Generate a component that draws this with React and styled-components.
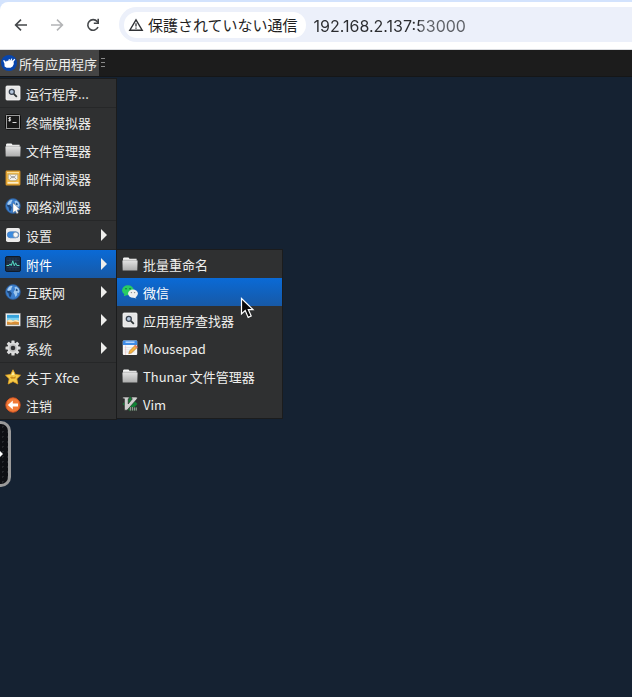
import React from 'react'
import styled, { createGlobalStyle } from 'styled-components'

const GlobalStyle = createGlobalStyle`
  * {
    box-sizing: border-box;
  }

  body {
    margin: 0;
    background: #152232;
  }

  button, input {
    margin: 0;
    padding: 0;
    border: 0;
    background: none;
    color: inherit;
    font: inherit;
    text-align: left;
  }
`

/* ---------- icons ---------- */

const Svg = ({ children, size = 16, box = '0 0 16 16' }) => (
  <svg width={size} height={size} viewBox={box} aria-hidden="true">
    {children}
  </svg>
)

const BackIcon = () => (
  <Svg>
    <path d="M14 8H3M8 2.6L2.6 8L8 13.4" fill="none" stroke="currentColor" strokeWidth="1.6" />
  </Svg>
)

const ForwardIcon = () => (
  <Svg>
    <path d="M2 8H13M8 2.6L13.4 8L8 13.4" fill="none" stroke="currentColor" strokeWidth="1.6" />
  </Svg>
)

const ReloadIcon = () => (
  <Svg>
    <path d="M13 10A5.3 5.3 0 1 1 12.2 4.6L13 5.5" fill="none" stroke="currentColor" strokeWidth="1.6" />
    <path d="M13.2 1.8V6.3H8.8" fill="none" stroke="currentColor" strokeWidth="1.6" />
  </Svg>
)

const WarningIcon = () => (
  <Svg>
    <path d="M8 2.8L14.2 13.2H1.8Z" fill="none" stroke="#303236" strokeWidth="1.4" />
    <path d="M8 6.2V9.6M8 10.4V11.8" stroke="#303236" strokeWidth="1.3" />
  </Svg>
)

const XfceIcon = () => (
  <Svg>
    <circle cx="8" cy="8" r="8" fill="#0745ad" />
    <path
      d="M2 5.2L4 5.4L4.8 7L6 5.4L7 6.2L7.8 4.2L8.8 4L8.8 6L10.4 3.4L11.2 3.6L10.8 6L13.6 3.8L14.2 4.6L12.6 6.8L12.8 9L11.6 11.6L9.6 12.8L5.6 12.8L3.6 11.4L3.4 8.4Z"
      fill="#fff"
    />
  </Svg>
)

const SearchIcon = () => (
  <Svg>
    <rect x="1" y="1" width="14" height="14" rx="1" fill="#e6e6e6" stroke="#fafafa" strokeWidth="0.8" />
    <circle cx="6.8" cy="6.8" r="2.5" fill="#b4c6dc" stroke="#39424f" strokeWidth="1.3" />
    <path d="M8.8 8.8L11.8 11.8" stroke="#2e3436" strokeWidth="1.8" />
  </Svg>
)

const TerminalIcon = () => (
  <Svg>
    <rect x="0.5" y="0.5" width="15" height="15" rx="1" fill="#9a9a9a" stroke="#111" />
    <rect x="2" y="2" width="12" height="12" fill="#181818" />
    <path
      d="M6 3.8H4.2L3.7 4.5L4.2 5.2H5.2L5.7 5.9L5.2 6.7H3.4M4.7 3V7.5M7.5 8.5H11.5"
      fill="none"
      stroke="#f2f2f2"
      strokeWidth="0.9"
    />
  </Svg>
)

const FolderIcon = () => (
  <Svg>
    <defs>
      <linearGradient id="folder" x1="0" y1="0" x2="0" y2="1">
        <stop offset="0" stopColor="#e2e2e2" />
        <stop offset="1" stopColor="#adadad" />
      </linearGradient>
    </defs>
    <path d="M1 13V2.5L1.8 1.6H6.5L7.5 2.8H14.6V12Z" fill="#f5f5f5" />
    <path d="M0.4 4.5H15.6L15.3 14.4H0.7Z" fill="url(#folder)" />
    <path d="M1 4.2H15" stroke="#8f8f8f" strokeWidth="0.6" />
  </Svg>
)

const MailIcon = () => (
  <Svg>
    <rect x="1.2" y="1.2" width="13.6" height="13.6" rx="0.6" fill="#f4bd4c" stroke="#e09c2a" strokeWidth="1.2" />
    <path d="M2 2.4H14" stroke="#fde3a1" />
    <path d="M2.6 12.8H13.4" stroke="#fdf3d8" strokeWidth="1.4" />
    <path d="M3.2 4.2H12.8V8.6L10.8 10.8H5.2L3.2 8.6Z" fill="#f6f4ee" stroke="#a98f56" strokeWidth="0.7" />
    <path d="M5 5.2L6.2 6.6H9.8L11 5.2M5 9L6.2 7.6H9.8L11 9" fill="none" stroke="#8d8d8d" strokeWidth="0.8" />
  </Svg>
)

const Globe = () => (
  <>
    <circle cx="8" cy="8" r="7.4" fill="#3b7fce" stroke="#2d5689" strokeWidth="0.8" />
    <path d="M5.2 7.2L6.8 9.2L6.2 11.4L5.2 13.6L4 12L3.6 9.4L2 8L2.4 6.6Z" fill="#1f4679" />
    <path d="M2.4 5.4L4 3L6.4 1.8L7.6 2.6L6.4 4L6.4 5.4L4.6 6.6L2.8 7Z" fill="#a9cdef" />
    <path d="M9.4 3.6L11.2 2.4L13.6 4.4L14.6 7L13.8 9L12.2 8.4L12.2 11L10.4 13L9.6 10.6L8.4 8.4L9.4 6.4L10.4 5.2Z" fill="#9cc6ec" />
    <path d="M11.2 4.6L13 6L12.2 7.2L10.6 6.8Z" fill="#27538a" />
  </>
)

const GlobeIcon = () => <Svg><Globe /></Svg>

const BrowserIcon = () => (
  <Svg>
    <Globe />
    <path d="M8 5L15 11.5L12 12L13.4 15L11.8 15.7L10.4 12.8L8 14.8Z" fill="#fff" stroke="#666" strokeWidth="0.4" />
  </Svg>
)

const SettingsIcon = () => (
  <Svg>
    <rect x="1" y="1" width="14" height="14" rx="1.8" fill="#ececec" />
    <rect x="2.3" y="4.8" width="11.5" height="6" rx="3" fill="#3c8ce0" stroke="#3c77bd" strokeWidth="0.7" />
    <circle cx="10.7" cy="7.8" r="2.6" fill="#f8f8f8" stroke="#8a96a5" strokeWidth="0.7" />
  </Svg>
)

const MonitorIcon = () => (
  <Svg>
    <rect x="0.5" y="0.5" width="15" height="15" rx="1.6" fill="#1c2c40" stroke="#101a28" />
    <path d="M2 4.5H14M2 8H14M2 11.5H14M5 2V14M8 2V14M11 2V14" stroke="#2b4462" strokeWidth="0.6" />
    <path d="M1.5 9.5H4L5 8L6.2 9.6L7.8 4.8L9.3 9.8L10.6 6.8L11.8 9.5H14.5" fill="none" stroke="#55d8c1" strokeWidth="1" />
  </Svg>
)

const PictureIcon = () => (
  <Svg>
    <rect x="0.8" y="1.4" width="14.4" height="12.6" fill="#f4f4f4" stroke="#aaa" strokeWidth="0.5" />
    <rect x="2" y="2.8" width="12" height="10" fill="#36a3dc" />
    <path d="M2 5.8H14V8H2Z" fill="#7dd2f2" />
    <path d="M2 8.4L5 7.4L8 8.6L11 7.8L14 8.4V11H2Z" fill="#fbe6b2" />
    <path d="M2 9.4L6 10.4L10 9.6L14 10.2V12.8H2Z" fill="#d98d35" />
  </Svg>
)

const GearIcon = () => (
  <Svg>
    <g fill="#dcdcdc">
      {[0, 45, 90, 135].map(turn => (
        <rect key={turn} x="6.4" y="0.5" width="3.2" height="15" rx="0.6" transform={`rotate(${turn} 8 8)`} />
      ))}
      <circle cx="8" cy="8" r="5.6" />
    </g>
    <circle cx="8" cy="8" r="3.8" fill="#bdbdbd" />
    <circle cx="8" cy="8" r="2.3" fill="#303132" />
  </Svg>
)

const StarIcon = () => (
  <Svg>
    <path
      d="M8 0.8L10.3 5.4L15.5 6.2L11.8 9.8L12.8 15L8 12.5L3.2 15L4.2 9.8L0.5 6.2L5.7 5.4Z"
      fill="#f6cb48"
      stroke="#e5a323"
      strokeWidth="0.8"
    />
    <path d="M5 8.3L7 7.4L8.5 8.2L11 7.2L10.3 9.6L6.5 9.8Z" fill="#c98a1c" />
    <path d="M8 2.4L9.5 5.8L6.5 6Z" fill="#fff0a6" />
  </Svg>
)

const LogoutIcon = () => (
  <Svg>
    <circle cx="8" cy="8" r="7.2" fill="#f07a38" stroke="#dd5520" strokeWidth="0.9" />
    <path d="M2.8 8L7.8 3.6V6.6H13V9.4H7.8V12.4Z" fill="#fff" />
  </Svg>
)

const WechatIcon = () => (
  <Svg>
    <path d="M1.8 12.2L2.6 9.5L5.4 11Z" fill="#28cd63" />
    <ellipse cx="5.9" cy="6.2" rx="5.8" ry="5" fill="#28cd63" />
    <circle cx="4" cy="4.8" r="0.8" fill="#14663a" />
    <circle cx="8" cy="4.8" r="0.8" fill="#14663a" />
    <ellipse cx="11" cy="9.6" rx="4.9" ry="4.2" fill="#eee" />
    <path d="M13 12.5L14.4 14.4L11 13.4Z" fill="#eee" />
    <circle cx="9.4" cy="8.6" r="0.7" fill="#888" />
    <circle cx="12.6" cy="8.6" r="0.7" fill="#888" />
  </Svg>
)

const MousepadIcon = () => (
  <Svg>
    <rect x="0.8" y="0.6" width="14.4" height="14.4" rx="1" fill="#f7f7f7" />
    <path d="M0.8 5V1.8Q0.8 0.6 2 0.6H14Q15.2 0.6 15.2 1.8V5Z" fill="#3f8ce6" />
    <path d="M3.5 2.2H12.5" stroke="#c3deff" strokeWidth="1.4" />
    <path d="M2.5 7.6H13M2.5 9.8H13M2.5 12H13" stroke="#d3d8de" strokeWidth="0.6" />
    <path d="M3.6 5.4V15" stroke="#eab6b6" strokeWidth="0.6" />
    <path d="M13.4 5L15.6 7.2L9.5 13L6.7 13.8L7.5 11Z" fill="#f4b23e" stroke="#a7641b" strokeWidth="0.5" />
    <path d="M13.4 5L15.6 7.2L14.4 8.3L12.2 6.1Z" fill="#e27d73" />
  </Svg>
)

const VimIcon = () => (
  <Svg>
    <path d="M8 0.5L15.5 8L8 15.5L0.5 8Z" fill="#118235" />
    <path
      d="M0.8 1H7.2V2.8H6.2V8L10.4 2.8H9.4V1H15.2V2.8L5 14.2H2.4V2.8H0.8Z"
      fill="#cfcfcf"
      stroke="#242424"
      strokeWidth="0.6"
    />
    <path d="M7.4 11H15V15H7.4Z" fill="#26382b" />
    <path d="M8.3 11V14.6M10.3 11V14.6M12.3 11.4V14.6M14.2 11.4V14.6" stroke="#ccc" strokeWidth="0.8" />
  </Svg>
)

const SubmenuArrow = () => (
  <svg width="6" height="12" viewBox="0 0 6 12" aria-hidden="true">
    <path d="M0 0L6 6L0 12Z" fill="#eeeeec" />
  </svg>
)

/* ---------- data ---------- */

const menuGroups = [
  [{ label: '运行程序...', icon: SearchIcon }],
  [
    { label: '终端模拟器', icon: TerminalIcon },
    { label: '文件管理器', icon: FolderIcon },
    { label: '邮件阅读器', icon: MailIcon },
    { label: '网络浏览器', icon: BrowserIcon },
  ],
  [{ label: '设置', icon: SettingsIcon, more: true }],
  [
    { label: '附件', icon: MonitorIcon, more: true, active: true },
    { label: '互联网', icon: GlobeIcon, more: true },
    { label: '图形', icon: PictureIcon, more: true },
    { label: '系统', icon: GearIcon, more: true },
  ],
  [
    { label: '关于 Xfce', icon: StarIcon },
    { label: '注销', icon: LogoutIcon },
  ],
]

const accessories = [
  { label: '批量重命名', icon: FolderIcon },
  { label: '微信', icon: WechatIcon, active: true },
  { label: '应用程序查找器', icon: SearchIcon },
  { label: 'Mousepad', icon: MousepadIcon },
  { label: 'Thunar 文件管理器', icon: FolderIcon },
  { label: 'Vim', icon: VimIcon },
]

const Item = ({ label, icon: Icon, more, active }) => (
  <MenuItem type="button" role="menuitem" $active={active}>
    <Icon />
    <MenuLabel>{label}</MenuLabel>
    {more && <SubmenuArrow />}
  </MenuItem>
)

const App = () => {
  return (
    <Page>
      <GlobalStyle />
      <BrowserChrome>
        <Toolbar>
          <NavButton type="button" aria-label="Back"><BackIcon /></NavButton>
          <NavButton type="button" aria-label="Forward" disabled><ForwardIcon /></NavButton>
          <NavButton type="button" aria-label="Reload"><ReloadIcon /></NavButton>
          <AddressBar>
            <SecurityChip type="button">
              <WarningIcon />
              保護されていない通信
            </SecurityChip>
            <AddressInput type="text" aria-label="URL" defaultValue="192.168.2.137:53000" />
          </AddressBar>
        </Toolbar>
      </BrowserChrome>

      <Panel>
        <AppsButton type="button" aria-expanded="true">
          <XfceIcon />
          所有应用程序
        </AppsButton>
        <Grip aria-hidden="true"><i /><i /><i /></Grip>
      </Panel>

      <Desktop>
        <Menu role="menu">
          {menuGroups.map(group => (
            <MenuGroup key={group[0].label}>
              {group.map(item => (
                <ItemSlot key={item.label}>
                  <Item {...item} />
                  {item.active && (
                    <Submenu role="menu">
                      {accessories.map(entry => <Item key={entry.label} {...entry} />)}
                      <Pointer width="16" height="22" viewBox="0 0 16 22" aria-hidden="true">
                        <path
                          d="M1.5 1.5V17L5.2 13.6L8.2 20.4L11.2 19L8.3 12.6H13Z"
                          fill="#0a0a0a"
                          stroke="#fff"
                          strokeWidth="1.2"
                        />
                      </Pointer>
                    </Submenu>
                  )}
                </ItemSlot>
              ))}
            </MenuGroup>
          ))}
        </Menu>
        <Handle type="button" aria-label="Toggle controls">
          <svg width="3" height="6" viewBox="0 0 3 6" aria-hidden="true">
            <path d="M0 0L3 3L0 6Z" fill="#fff" />
          </svg>
        </Handle>
      </Desktop>
    </Page>
  )
}

const Page = styled.div`
  display: flex;
  flex-direction: column;
  min-height: 100vh;
  font-family: 'Noto Sans CJK SC', 'Noto Sans', sans-serif;
  font-size: 13px;
  color: #eeeeec;
`

const BrowserChrome = styled.header`
  padding-top: 2px;
  background: #d3e3fd;
`

const Toolbar = styled.div`
  display: flex;
  align-items: center;
  gap: 8px;
  height: 48px;
  padding: 0 0 2px 7px;
  background: #fff;
  border-bottom: 1px solid #dadce0;
  border-top-left-radius: 8px;
`

const NavButton = styled.button`
  display: flex;
  align-items: center;
  justify-content: center;
  width: 28px;
  height: 28px;
  color: #44474a;

  &:disabled {
    color: #b3b4b6;
  }
`

const AddressBar = styled.div`
  display: flex;
  flex: 1;
  align-items: center;
  gap: 8px;
  min-width: 0;
  height: 35px;
  margin-left: 4px;
  padding-left: 5px;
  border-radius: 18px 0 0 18px;
  background: #ecf0fa;
`

const SecurityChip = styled.button`
  display: flex;
  flex-shrink: 0;
  align-items: center;
  gap: 4px;
  height: 26px;
  padding: 0 8px 0 4px;
  border-radius: 13px;
  background: #fff;
  color: #1f1f1f;
  font-family: 'Noto Sans CJK JP', sans-serif;
  font-size: 15px;
`

const AddressInput = styled.input`
  flex: 1;
  min-width: 0;
  height: 26px;
  padding-top: 2px;
  outline: none;
  font-family: Inter, sans-serif;
  font-size: 16px;
  color: #1f1f1f;
  /* the port is dimmer than the host */
  background: linear-gradient(90deg, #2b2c2f 106px, #5d6066 106px);
  background-clip: text;
  -webkit-text-fill-color: transparent;
`

const Panel = styled.div`
  display: flex;
  height: 27px;
  background: #1c1c1c;
  border-bottom: 1px solid #151617;
`

const AppsButton = styled.button`
  display: flex;
  align-items: center;
  gap: 2px;
  padding: 0 2px 0 1px;
  background: #444;
`

const Grip = styled.span`
  display: flex;
  flex-direction: column;
  gap: 3px;
  padding: 8px 2px;

  i {
    width: 4px;
    height: 1px;
    background: #8a8a8a;
  }
`

const Desktop = styled.main`
  position: relative;
  flex: 1;
  background: #152232;
`

const Menu = styled.div`
  position: relative;
  z-index: 1;
  width: 117px;
  margin-top: 1px;
  border: solid #1b1c1d;
  border-width: 1px 1px 1px 0;
  background: #2f3031;
`

const MenuGroup = styled.div`
  & + & {
    border-top: 1px solid #262728;
  }
`

const ItemSlot = styled.div`
  position: relative;
`

const MenuItem = styled.button`
  display: flex;
  align-items: center;
  gap: 5px;
  width: 100%;
  height: 28px;
  padding: 0 9px 0 5px;
  white-space: nowrap;
  background: ${props => (props.$active ? 'linear-gradient(#0a6ad6, #1759a6)' : 'none')};
  color: ${props => (props.$active ? '#fff' : '#eeeeec')};

  svg {
    flex-shrink: 0;
  }
`

const MenuLabel = styled.span`
  flex: 1;
`

const Submenu = styled.div`
  position: absolute;
  top: -1px;
  left: 100%;
  width: 167px;
  border: 1px solid #1b1c1d;
  background: #2f3031;
`

const Pointer = styled.svg`
  position: absolute;
  top: 47px;
  left: 123px;
`

const Handle = styled.button`
  position: absolute;
  top: 344px;
  left: 0;
  display: flex;
  align-items: center;
  width: 11px;
  height: 66px;
  border: 3px solid #9a9a9a;
  border-left: 0;
  border-radius: 0 10px 10px 0;
  background: radial-gradient(circle, #25272b 1px, #0e0f13 1px) 0 0 / 5px 5px;
`

export default App
